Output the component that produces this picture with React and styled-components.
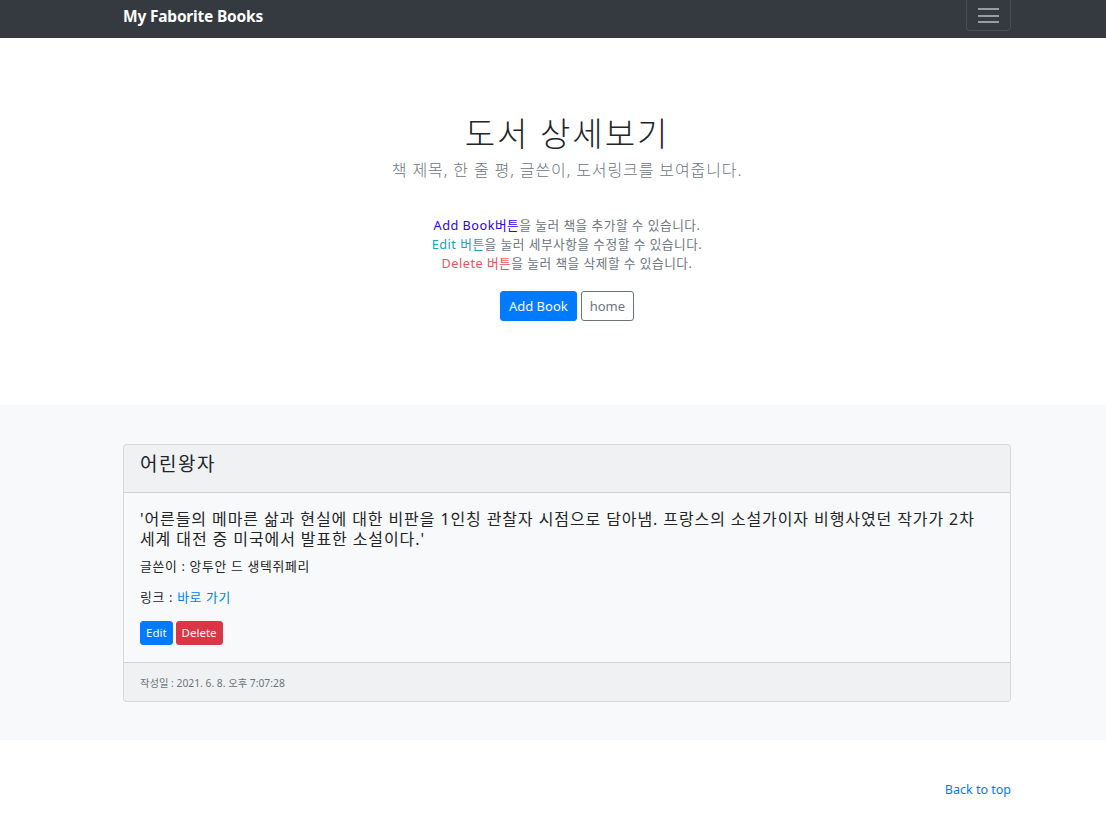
import React from "react";
import styled, { createGlobalStyle } from "styled-components";

const Global = createGlobalStyle`
  html, body { margin: 0; padding: 0; background: #fff; }
  body {
    font-family: "Noto Sans", "Noto Sans CJK KR", sans-serif;
    color: #212529;
    -webkit-font-smoothing: antialiased;
  }
  * { box-sizing: border-box; }
`;

const Container = styled.div`
  margin-left: 123px;
  width: 888px;
`;

const Navbar = styled.header`
  height: 38px;
  background: #343a40;
  overflow: hidden;
`;

const NavInner = styled(Container)`
  height: 38px;
  display: flex;
  justify-content: space-between;
  align-items: flex-start;
`;

const Brand = styled.a`
  color: #fff;
  font-weight: 700;
  font-size: 15.5px;
  letter-spacing: -0.2px;
  line-height: 32px;
  text-decoration: none;
`;

const Toggler = styled.button`
  width: 45px;
  height: 38px;
  margin-top: -7px;
  background: transparent;
  border: 1px solid rgba(255, 255, 255, 0.1);
  border-radius: 4px;
  display: flex;
  flex-direction: column;
  align-items: center;
  justify-content: center;
  gap: 4.5px;
  padding: 7px 0 0;
`;

const Bar = styled.span`
  display: block;
  width: 21px;
  height: 2px;
  background: rgba(255, 255, 255, 0.5);
`;

const Hero = styled.section`
  height: 367px;
  padding-top: 76px;
`;

const HeroInner = styled(Container)`
  display: flex;
  flex-direction: column;
  align-items: center;
  text-align: center;
`;

const Title = styled.h1`
  margin: 0;
  font-size: 33px;
  font-weight: 300;
  letter-spacing: 2px;
  line-height: 40px;
  color: #212529;
`;

const Lead = styled.p`
  margin: 4px 0 0;
  font-size: 16px;
  font-weight: 300;
  letter-spacing: 0.9px;
  line-height: 24px;
  color: #6c757d;
`;

const Notes = styled.div`
  margin-top: 34px;
  font-size: 12.7px;
  letter-spacing: 0.5px;
  line-height: 19px;
  color: #6c757d;
`;

const Hl = styled.span`
  color: ${(p) => p.$c};
`;

const BtnRow = styled.div`
  margin-top: 18px;
  display: flex;
  gap: 4px;
`;

const Btn = styled.button`
  font-family: inherit;
  font-size: ${(p) => (p.$sm ? "11.5px" : "13px")};
  line-height: 1;
  height: ${(p) => (p.$sm ? "24px" : "30px")};
  padding: ${(p) => (p.$sm ? "0 5px" : "0 8px")};
  border-radius: 3px;
  border: 1px solid ${(p) => p.$border || p.$bg};
  background: ${(p) => p.$bg};
  color: ${(p) => p.$fg};
  cursor: pointer;
`;

const Album = styled.section`
  background: #f8f9fa;
  padding: 39px 0 38px;
`;

const Card = styled.article`
  margin-left: 123px;
  width: 888px;
  border: 1px solid rgba(0, 0, 0, 0.125);
  border-radius: 4px;
  background: #f8f9fa;
  overflow: hidden;
`;

const CardHeader = styled.div`
  height: 48px;
  padding: 7px 16px 0;
  background: rgba(0, 0, 0, 0.03);
  border-bottom: 1px solid rgba(0, 0, 0, 0.125);
  font-size: 19px;
  letter-spacing: 1.5px;
  line-height: 24px;
  color: #212529;
`;

const CardBody = styled.div`
  padding: 16px 16px 17px;
`;

const Summary = styled.p`
  margin: 0 0 8px;
  font-size: 16px;
  letter-spacing: 0.9px;
  line-height: 20px;
  color: #212529;
`;

const Meta = styled.p`
  margin: 0 0 12px;
  font-size: 12.8px;
  letter-spacing: 0.7px;
  line-height: 19px;
  color: #212529;
`;

const Link = styled.a`
  color: #007bff;
  text-decoration: none;
`;

const SmallRow = styled.div`
  display: flex;
  gap: 3px;
  margin-top: 14px;
`;

const CardFooter = styled.div`
  height: 39px;
  padding: 0 16px;
  background: rgba(0, 0, 0, 0.03);
  border-top: 1px solid rgba(0, 0, 0, 0.125);
  display: flex;
  align-items: center;
  font-size: 10.3px;
  color: #6c757d;
`;

const Footer = styled(Container)`
  padding-top: 41px;
  display: flex;
  justify-content: flex-end;
`;

const BackTop = styled.a`
  font-size: 12.5px;
  color: #007bff;
  text-decoration: none;
`;

export default function App() {
  return (
    <>
      <Global />
      <Navbar>
        <NavInner>
          <Brand href="#">My Faborite Books</Brand>
          <Toggler aria-label="menu">
            <Bar />
            <Bar />
            <Bar />
          </Toggler>
        </NavInner>
      </Navbar>
      <Hero>
        <HeroInner>
          <Title>도서 상세보기</Title>
          <Lead>책 제목, 한 줄 평, 글쓴이, 도서링크를 보여줍니다.</Lead>
          <Notes>
            <div>
              <Hl $c="#2a00ff">Add Book버튼</Hl>을 눌러 책을 추가할 수 있습니다.
            </div>
            <div>
              <Hl $c="#17a2b8">Edit 버튼</Hl>을 눌러 세부사항을 수정할 수 있습니다.
            </div>
            <div>
              <Hl $c="#e8505b">Delete 버튼</Hl>을 눌러 책을 삭제할 수 있습니다.
            </div>
          </Notes>
          <BtnRow>
            <Btn $bg="#007bff" $fg="#fff">Add Book</Btn>
            <Btn $bg="#fff" $fg="#6c757d" $border="#6c757d">home</Btn>
          </BtnRow>
        </HeroInner>
      </Hero>
      <Album>
        <Card>
          <CardHeader>어린왕자</CardHeader>
          <CardBody>
            <Summary>
              '어른들의 메마른 삶과 현실에 대한 비판을 1인칭 관찰자 시점으로 담아냄. 프랑스의 소설가이자 비행사였던 작가가 2차 세계 대전 중 미국에서 발표한 소설이다.'
            </Summary>
            <Meta>글쓴이 : 앙투안 드 생텍쥐페리</Meta>
            <Meta>
              링크 : <Link href="#">바로 가기</Link>
            </Meta>
            <SmallRow>
              <Btn $sm $bg="#007bff" $fg="#fff">Edit</Btn>
              <Btn $sm $bg="#dc3545" $fg="#fff">Delete</Btn>
            </SmallRow>
          </CardBody>
          <CardFooter>작성일 : 2021. 6. 8. 오후 7:07:28</CardFooter>
        </Card>
      </Album>
      <Footer>
        <BackTop href="#">Back to top</BackTop>
      </Footer>
    </>
  );
}
